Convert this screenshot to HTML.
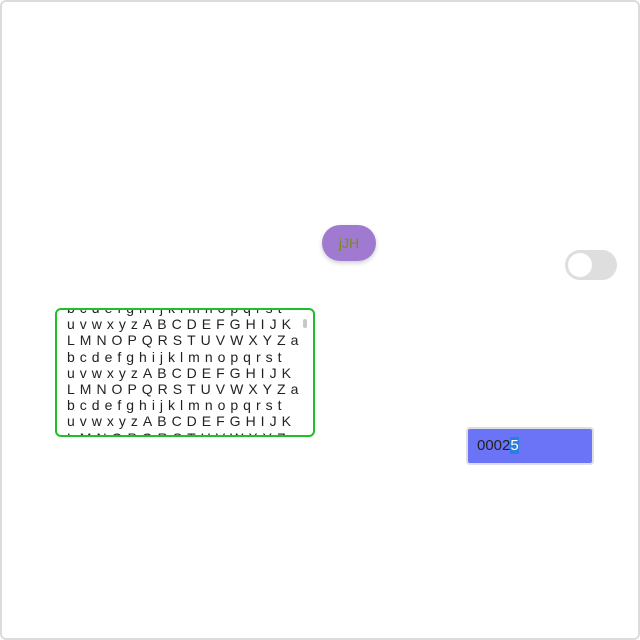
<!DOCTYPE html>
<html><head><style>
html,body{margin:0;padding:0;}
body{width:640px;height:640px;position:relative;overflow:hidden;background:#fff;}
.frame{position:absolute;left:0;top:0;width:636px;height:636px;border:2px solid #dcdcdc;border-radius:6px;}
.btn{position:absolute;left:322px;top:225px;width:54px;height:36px;border-radius:18px;background:#a07ad0;box-shadow:0 2px 5px rgba(0,0,0,.2);color:#7a8a1e;font:14px "Liberation Sans",sans-serif;text-align:center;line-height:36px;}
.tog{position:absolute;left:565px;top:250px;width:52px;height:30px;border-radius:15px;background:#dedede;}
.knob{position:absolute;left:3px;top:3px;width:24px;height:24px;border-radius:50%;background:#fff;}
.ta{position:absolute;left:55px;top:308px;width:256px;height:125px;border:2px solid #1fbf2a;border-radius:6px;overflow:hidden;background:#fff;}
.txt{position:absolute;left:10px;top:-10px;font:14px "Liberation Sans",sans-serif;letter-spacing:5px;line-height:16.2px;color:#222;white-space:pre;}
.sb{position:absolute;right:6px;top:9px;width:4px;height:9px;border-radius:2px;background:#c8c8c8;}
.inp{position:absolute;left:466px;top:427px;width:124px;height:34px;border:2px solid #dedede;border-radius:4px;background:#6b73f7;font:15px "Liberation Sans",sans-serif;line-height:34px;color:#222;}
.inp span.t{position:absolute;left:9px;}
.sel{background:#2a7de1;color:#fff;}
</style></head><body>
<div class="frame"></div>
<div class="btn">jJH</div>
<div class="tog"><div class="knob"></div></div>
<div class="ta"><div class="txt">bcdefghijklmnopqrst
uvwxyzABCDEFGHIJK
LMNOPQRSTUVWXYZa
bcdefghijklmnopqrst
uvwxyzABCDEFGHIJK
LMNOPQRSTUVWXYZa
bcdefghijklmnopqrst
uvwxyzABCDEFGHIJK
LMNOPQRSTUVWXYZa</div><div class="sb"></div></div>
<div class="inp"><span class="t">0002<span class="sel">5</span></span></div>
</body></html>
